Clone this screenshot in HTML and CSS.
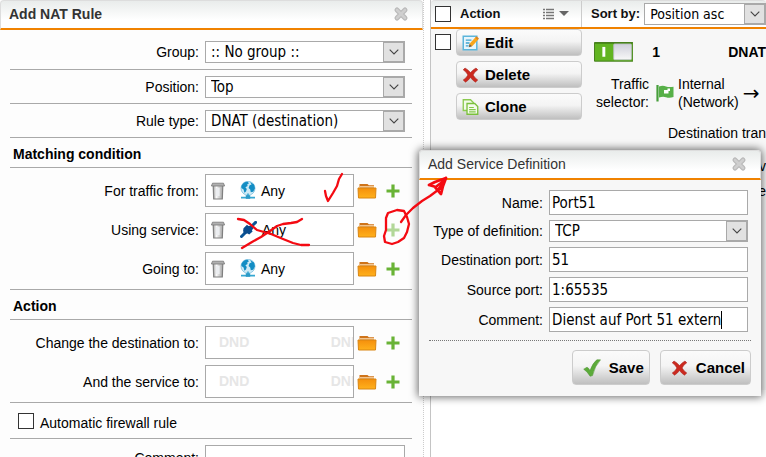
FILE: index.html
```html
<!DOCTYPE html>
<html lang="en">
<head>
<meta charset="utf-8">
<title>NAT Rules</title>
<link rel="stylesheet" href="styles.css">
</head>
<body>
<svg class="defs" aria-hidden="true">
  <defs>
    <linearGradient id="gTrash" x1="0" x2="1"><stop offset="0" stop-color="#a8a8a8"/><stop offset=".35" stop-color="#fafafa"/><stop offset=".6" stop-color="#d4d4d4"/><stop offset="1" stop-color="#aaa"/></linearGradient>
    <linearGradient id="gFolder" x1="0" x2="0" y1="0" y2="1"><stop offset="0" stop-color="#f58f0c"/><stop offset="1" stop-color="#ffb11c"/></linearGradient>
    <linearGradient id="gKnob" x1="0" x2="0" y1="0" y2="1"><stop offset="0" stop-color="#cfcfdb"/><stop offset="1" stop-color="#f8f8f8"/></linearGradient>
    <symbol id="close" viewBox="0 0 16 16"><path d="M4 4l8 8M12 4l-8 8" stroke="#b9b9b9" stroke-width="5" stroke-linecap="round"/><path d="M4 4l8 8M12 4l-8 8" stroke="#cfcfcf" stroke-width="2.6" stroke-linecap="round"/></symbol>
    <symbol id="chevron" viewBox="0 0 10 6"><path d="M.7.7L5 5 9.3.7" fill="none" stroke="#444" stroke-width="1.1"/></symbol>
    <symbol id="trash" viewBox="0 0 14 18"><path d="M2.200 3.500h9.600L11.300 17H2.700z" fill="url(#gTrash)" stroke="#808080" stroke-width="1.200"/><path d="M5 6h3.600v8H5z" fill="#eceef1"/><path d="M1.5 1.2h11L13.6 4H.4z" fill="#b0b0b0" stroke="#777" stroke-width=".8"/></symbol>
    <symbol id="globe" viewBox="0 0 16 19"><circle cx="8" cy="7.3" r="7" fill="#cfeaf6" stroke="#6bb9dc" stroke-width=".7"/><path d="M1.4 5C2.6 2 5 .6 7.6.7L9 2.2 7.2 3.4 7.6 5 5.4 6.2 6.8 8 6 10.6 4.4 11.8 3.6 8.6 1.4 7zM10 1l4 2.4 1 3.8-1.8 3.6-2.4.4-.6-2.8L8.6 7l1-2.8 2-.8z" fill="#138dc4"/><path d="M8 12.6v3.6M1 16.6h14" stroke="#36a7d2" stroke-width="1.6"/><path d="M5.8 14.2h4.400v3.600H5.800z" fill="#2c9ac7"/></symbol>
    <symbol id="plug" viewBox="0 0 17 17"><path d="M1.5 15.5l4-4M12 5l3.6-3.6" stroke="#0a5496" stroke-width="3" stroke-linecap="round"/><path d="M3.5 7.2L7 3.8l1.4 1.2 4-.8.9 3.2-1.4 1.8.7 1.2-3.4 3.2-1.6-1.2-3.6.4-.9-3z" fill="#0a4c8d"/></symbol>
    <symbol id="folder" viewBox="0 0 20 16"><path d="M2.5 4.5V1h8l1.4 1.2H17v2.3z" fill="#cf741a"/><path d="M3 3.5h14" stroke="#f2c58f" stroke-width="1"/><path d="M1 5h18l-.5 10h-17z" fill="url(#gFolder)" stroke="#d98613" stroke-width="1"/></symbol>
    <symbol id="plus" viewBox="0 0 14 14"><path d="M7 .5v13M.5 7h13" stroke="#69b336" stroke-width="3.2"/></symbol>
    <symbol id="cross" viewBox="0 0 16 16"><path d="M2.5 1Q5.5 2.5 8 5.6 10.5 2.5 13.5 1l1.8 1.8Q12 4.8 10.6 8q1.8 3.2 4.7 5L13 15.2Q10 13.4 8 10.5 6 13.4 3 15.2L.7 13Q3.8 11.2 5.4 8 3.8 4.8.7 2.8z" fill="#cb2a20" stroke="#a51e19" stroke-width=".5"/></symbol>
    <symbol id="tick" viewBox="0 0 18 18"><path d="M.7 10.2L4 8.2q2 1 3 3.4Q9.600 4 13.800.8h3.700Q11.800 7 9.500 16.600l-2.400.7Q4.500 12.600.7 10.200z" fill="#5cab3a" stroke="#4a9330" stroke-width=".5"/></symbol>
    <symbol id="edit" viewBox="0 0 18 17"><path d="M1.300 1.300h14.400v14.400H1.300z" fill="#e8f5fb" stroke="#5bb5db" stroke-width="1.600"/><path d="M4 5.500h6M4 8.500h4M4 11.500h3" stroke="#3da4d0" stroke-width="1.400"/><path d="M7.200 13l1-4L14.600 2.200l2.800 2.600L11 11.600z" fill="#f9a61c"/><path d="M7.200 13l.8-3.400 2.600 2.300z" fill="#705e50"/><path d="M14 2.800L15.500 1.200l2.500 2.400-1.500 1.700z" fill="#e0861e"/></symbol>
    <symbol id="clone" viewBox="0 0 17 17"><path d="M.8.8h7.700l3 3v8.400H.8z" fill="#f2fae8" stroke="#8bca50" stroke-width="1.400"/><path d="M4.800 4.800h8.200l3.200 3.200v8.200H4.800z" fill="#f5fbec" stroke="#7ac03c" stroke-width="1.400"/><path d="M7 9h5M7 11.300h7M7 13.700h7" stroke="#84c84b" stroke-width="1.200"/></symbol>
  </defs>
</svg>

<main class="layout">
  <section class="editor">
    <header class="bar">
      <h1>Add NAT Rule</h1>
      <button class="close" type="button" aria-label="Close rule"><svg><use href="#close"/></svg></button>
    </header>
    <form class="rule">
      <div class="field first"><label for="group">Group:</label>
        <span class="select"><select id="group"><option>:: No group ::</option></select><span class="arrow"><svg><use href="#chevron"/></svg></span></span></div>
      <div class="field"><label for="position">Position:</label>
        <span class="select"><select id="position"><option>Top</option></select><span class="arrow"><svg><use href="#chevron"/></svg></span></span></div>
      <div class="field"><label for="type">Rule type:</label>
        <span class="select"><select id="type"><option>DNAT (destination)</option></select><span class="arrow"><svg><use href="#chevron"/></svg></span></span></div>

      <h2>Matching condition</h2>
      <div class="group">
        <div class="pick"><span class="name">For traffic from:</span>
          <div class="drop"><button type="button" class="icon" aria-label="Clear source"><svg class="trash"><use href="#trash"/></svg></button><svg class="globe"><use href="#globe"/></svg><span>Any</span></div>
          <button type="button" class="icon" aria-label="Browse source"><svg class="folder"><use href="#folder"/></svg></button>
          <button type="button" class="icon" aria-label="Add source"><svg class="plus"><use href="#plus"/></svg></button></div>
        <div class="pick"><span class="name">Using service:</span>
          <div class="drop"><button type="button" class="icon" aria-label="Clear service"><svg class="trash"><use href="#trash"/></svg></button><svg class="plug"><use href="#plug"/></svg><span>Any</span></div>
          <button type="button" class="icon" aria-label="Browse services"><svg class="folder"><use href="#folder"/></svg></button>
          <button type="button" class="icon pale" aria-label="Add service"><svg class="plus"><use href="#plus"/></svg></button></div>
        <div class="pick"><span class="name">Going to:</span>
          <div class="drop"><button type="button" class="icon" aria-label="Clear target"><svg class="trash"><use href="#trash"/></svg></button><svg class="globe"><use href="#globe"/></svg><span>Any</span></div>
          <button type="button" class="icon" aria-label="Browse targets"><svg class="folder"><use href="#folder"/></svg></button>
          <button type="button" class="icon" aria-label="Add target"><svg class="plus"><use href="#plus"/></svg></button></div>
      </div>

      <h2>Action</h2>
      <div class="group">
        <div class="pick"><span class="name">Change the destination to:</span>
          <div class="drop empty"><span>DND</span><span>DND</span></div>
          <button type="button" class="icon" aria-label="Browse destinations"><svg class="folder"><use href="#folder"/></svg></button>
          <button type="button" class="icon" aria-label="Add destination"><svg class="plus"><use href="#plus"/></svg></button></div>
        <div class="pick"><span class="name">And the service to:</span>
          <div class="drop empty"><span>DND</span><span>DND</span></div>
          <button type="button" class="icon" aria-label="Browse new services"><svg class="folder"><use href="#folder"/></svg></button>
          <button type="button" class="icon" aria-label="Add new service"><svg class="plus"><use href="#plus"/></svg></button></div>
      </div>
      <div class="auto"><input type="checkbox" id="auto"><label for="auto">Automatic firewall rule</label></div>
      <div class="field last"><label for="note">Comment:</label><input class="text" id="note" type="text"></div>
    </form>
  </section>

  <section class="rules">
    <header class="bar listbar">
      <div class="actionhead"><input type="checkbox" aria-label="Select all"><b>Action</b>
        <svg class="listicon" viewBox="0 0 26 12"><path d="M0 1.500h2M0 4.500h2M0 7.500h2M0 10.500h2M3 1.500h8M3 4.500h8M3 7.500h8M3 10.500h8" stroke="#777" stroke-width="1.500"/><path d="M16 3h10l-5 5z" fill="#666"/></svg></div>
      <div class="sort"><label for="sort">Sort by:</label>
        <span class="select"><select id="sort"><option>Position asc</option></select><span class="arrow"><svg><use href="#chevron"/></svg></span></span></div>
    </header>
    <div class="entry">
      <div class="actions">
        <input type="checkbox" aria-label="Select rule 1">
        <div class="stack">
          <button type="button" class="btn"><svg><use href="#edit"/></svg>Edit</button>
          <button type="button" class="btn"><svg><use href="#cross"/></svg>Delete</button>
          <button type="button" class="btn"><svg><use href="#clone"/></svg>Clone</button>
        </div>
      </div>
      <div class="detail">
        <div class="headline">
          <button type="button" class="toggle" aria-label="Rule enabled"><svg viewBox="0 0 40 20"><path d="M.5.500h39v19H.5z" fill="#62b421" stroke="#447d1d"/><path d="M1 1.500h38" stroke="#498b19"/><path d="M10 5v10" stroke="#fff" stroke-width="3"/><rect x="20" y="2" width="18" height="16" rx="1" fill="url(#gKnob)" stroke="#b9bbc6" stroke-width=".8"/></svg></button>
          <b>1</b><b class="kind">DNAT</b>
        </div>
        <div class="traffic"><span class="name">Traffic<br>selector:</span>
          <svg class="flag" viewBox="0 0 18 18"><path d="M1.500 1v16.500" stroke="#479e3b" stroke-width="2.200"/><path d="M3 2.500q4-1.500 7 0 3 1 7.500.2v10.300q-4 1.500-7.500.2Q7 12 3 13.500z" fill="#57b048"/><path d="M8 9.500h4.500V7H14V4.500h-2.500V6H8z" fill="#fff"/></svg>
          <span>Internal<br>(Network)</span><span class="to">→</span></div>
        <p>Destination translation</p>
        <div class="more">v<br>e</div>
      </div>
    </div>
  </section>
</main>

<section class="dialog" role="dialog" aria-labelledby="dlg">
  <header class="bar"><h3 id="dlg">Add Service Definition</h3>
    <button class="close" type="button" aria-label="Close dialog"><svg><use href="#close"/></svg></button></header>
  <form>
    <div class="rows">
      <label for="name">Name:</label><input class="text" id="name" type="text" value="Port51">
      <label for="def">Type of definition:</label><span class="select"><select id="def"><option>TCP</option></select><span class="arrow"><svg><use href="#chevron"/></svg></span></span>
      <label for="dport">Destination port:</label><input class="text" id="dport" type="text" value="51">
      <label for="sport">Source port:</label><input class="text" id="sport" type="text" value="1:65535">
      <label for="comment">Comment:</label><span class="typing text"><input id="comment" type="text" value="Dienst auf Port 51 extern"><i class="caret"></i></span>
    </div>
    <footer>
      <button type="button" class="btn big"><svg class="tick"><use href="#tick"/></svg>Save</button>
      <button type="button" class="btn big"><svg><use href="#cross"/></svg>Cancel</button>
    </footer>
  </form>
</section>

<svg class="marks" width="460" height="260" viewBox="0 0 460 260" aria-hidden="true">
  <g fill="none" stroke="#f40a12" stroke-width="2.300" stroke-linecap="round" stroke-linejoin="round">
    <path d="M325 191l1 5 2 5 5-8 4-7 2-7 3-5"/>
    <path d="M238 219l6 1 6 4 7 6 14 4 12 5 10 4 8 2 8 0"/>
    <path d="M242 248l10-6 9-5 9-6 7-5 6-2 8-1 6-1 5-3"/>
    <path d="M404 211l-7-1-9 3-2 5 0 12-2 6 1 6 7 2 6-2 6-4 3-6 2-8-2-7-3-6"/>
    <path d="M401 222l5-7 7-7 9-7 8-5 8-6 7-10"/>
    <path d="M446 178l-11 4-6 3 7 2M446 178l-3 8-2 8-6-7M445 180l-8 6M444 183l-5 6" stroke-width="2.800"/>
  </g>
</svg>
</body>
</html>
```

FILE: styles.css
```css
* { box-sizing: border-box; }
body {
  margin: 0;
  min-height: 100vh;
  position: relative;
  overflow: hidden;
  background: #fff;
  color: #000;
  font: 14px/18px "Liberation Sans", Arial, sans-serif;
}
h1, h2, h3, p { margin: 0; font-size: 14px; }
button { margin: 0; padding: 0; border: 0; background: none; color: inherit; font: inherit; }
svg { display: block; flex: none; }
.defs { position: absolute; width: 0; height: 0; }

.layout {
  display: grid;
  grid-template-columns: minmax(0, 424fr) minmax(0, 336fr);
  gap: 6px;
  height: 100vh;
  overflow: hidden;
}
.editor { background: #fdfdfd; border-right: 1px dotted #ccc; }
.bar {
  display: flex;
  align-items: center;
  justify-content: space-between;
  height: 30px;
  border: 1px solid #ddd;
  border-bottom: 2px solid #f08200;
  border-radius: 4px 4px 0 0;
  background: linear-gradient(#e9eceb, #fff 70%);
  padding: 0 13px 2px 8px;
  color: #333;
}
.close svg { width: 16px; height: 16px; }

.rule { padding: 0 11px 0 10px; }
.field {
  display: grid;
  grid-template-columns: 189px 200px;
  column-gap: 6px;
  align-items: center;
  padding: 6px 0 5px;
  border-bottom: 1px solid #a9a9a9;
}
.field.first { padding: 11px 0 6px; }
.field.last { border: 0; }
.field label, .name { text-align: right; }
.select {
  display: grid;
  grid-template-columns: minmax(0, 1fr) 21px;
  height: 22px;
  border: 1px solid #a9a9a9;
  background: #fff;
}
.select select {
  grid-area: 1 / 1 / 2 / 3;
  width: 100%;
  appearance: none;
  border: 0;
  border-radius: 0;
  padding: 0 22px 0 5px;
  background: transparent;
  color: #000;
}
.select select, .text { font: 15px/18px "DejaVu Sans Condensed", "Noto Sans", sans-serif; }
.arrow {
  grid-area: 1 / 2;
  display: grid;
  place-items: center;
  border: 1px solid #a9a9a9;
  background: #e1e1e1;
  pointer-events: none;
}
.arrow svg { width: 10px; height: 6px; }
.text { width: 100%; height: 25px; border: 1px solid #a9a9a9; background: #fff; padding: 0 2px; }
.typing { display: flex; align-items: center; }
.typing input { field-sizing: content; min-width: 0; padding: 0; border: 0; outline: 0; background: none; font: inherit; }
.caret { width: 1px; height: 18px; background: #000; }

h2 { padding: 7px 3px 4px; border-bottom: 1px solid #a9a9a9; }
.group { display: grid; row-gap: 6px; padding: 6px 0 4px; border-bottom: 1px solid #a9a9a9; }
.pick { display: grid; grid-template-columns: 192px 149px 20px 20px; column-gap: 3px; align-items: center; }
.pick > .name { padding-right: 3px; }
.pick > .icon:last-child { justify-self: end; }
.drop {
  display: flex;
  align-items: center;
  height: 33px;
  border: 1px solid #a9a9a9;
  background: #fff;
  padding: 0 5px;
  overflow: hidden;
}
.drop .icon { margin-right: 15px; }
.drop span { margin-left: 5px; }
.drop.empty { justify-content: space-between; padding: 0 0 2px 8px; color: #e6e6e6; font-weight: bold; }
.drop.empty span:last-child { margin-right: -8px; }
.trash { width: 14px; height: 18px; }
.globe { width: 16px; height: 19px; }
.plug { width: 17px; height: 17px; }
.folder { width: 20px; height: 16px; }
.plus { width: 14px; height: 14px; }
.pale { opacity: .5; }
.auto { display: flex; align-items: center; gap: 6px; padding: 7px 8px 6px; border-bottom: 1px solid #a9a9a9; }
input[type="checkbox"] {
  appearance: none;
  flex: none;
  width: 16px;
  height: 16px;
  margin: 0;
  border: 1px solid #333;
  background: #fff;
}
.auto label { padding-top: 4px; }

.rules { border-left: 1px solid #c4c4c4; background: linear-gradient(#f7f7f7 390px, #fff 390px); min-width: 0; overflow: hidden; }
.listbar { height: 29px; padding: 0; justify-content: flex-start; align-items: stretch; border-left: 0; border-right: 0; color: #111; font-size: 13px; }
.actionhead { display: flex; align-items: center; width: 151px; flex: none; padding: 0 12px 0 4px; border-right: 1px solid #ccc; }
.actionhead b { margin-left: 9px; }
.listicon { width: 26px; height: 12px; margin-left: auto; }
.sort { display: flex; flex: 1; align-items: center; gap: 4px; padding-left: 9px; font-weight: bold; min-width: 0; }
.sort .select { flex: 1; min-width: 0; }
.sort select { font-size: 14px; }
.entry { display: grid; grid-template-columns: 151px minmax(0, 1fr); }
.actions { display: flex; align-items: flex-start; gap: 5px; padding-left: 4px; }
.actions input { margin-top: 5px; }
.stack { display: grid; flex: 1; gap: 5px; }
.btn {
  display: flex;
  align-items: center;
  gap: 6px;
  height: 27px;
  padding: 0 5px;
  border: 1px solid #ccc;
  border-radius: 4px;
  background: linear-gradient(#fbfbfb, #f4f4f4 45%, #bfbfbf);
  font: bold 15px/18px "Liberation Sans", Arial, sans-serif;
}
.btn svg { width: 17px; height: 16px; }
.btn.big { height: 35px; gap: 8px; padding: 0 5px 0 10px; }
.btn .tick { width: 18px; height: 18px; }
.detail { padding: 13px 0 0 12px; white-space: nowrap; }
.headline { display: flex; align-items: center; height: 20px; }
.toggle { width: 40px; height: 20px; margin-right: 19px; }
.kind { margin-left: 68px; }
.traffic { display: flex; align-items: center; padding-top: 13px; }
.traffic .name { width: 55px; }
.flag { width: 18px; height: 18px; margin: 0 4px 0 7px; }
.to { margin-left: 4px; font: 20px/18px "DejaVu Sans", sans-serif; }
.detail p { padding: 13px 0 0 74px; }
.more { padding-top: 12px; line-height: 25px; text-align: right; }

.dialog {
  position: absolute;
  top: 150px;
  right: 5px;
  width: 342px;
  background: #f7f7f7;
  box-shadow: 0 0 8px 1px rgba(0, 0, 0, .6);
  border-radius: 4px 4px 0 0;
}
.dialog h3 { font-weight: normal; }
.rows {
  display: grid;
  grid-template-columns: 115px minmax(0, 1fr);
  gap: 5px 6px;
  align-items: center;
  padding: 10px 13px 8px 9px;
}
.rows label { text-align: right; white-space: nowrap; }
.dialog footer {
  display: flex;
  justify-content: flex-end;
  gap: 10px;
  margin: 0 10px;
  padding: 9px 0 11px;
  border-top: 1px dotted #777;
}
.marks { position: absolute; top: 0; left: 0; pointer-events: none; }
```
